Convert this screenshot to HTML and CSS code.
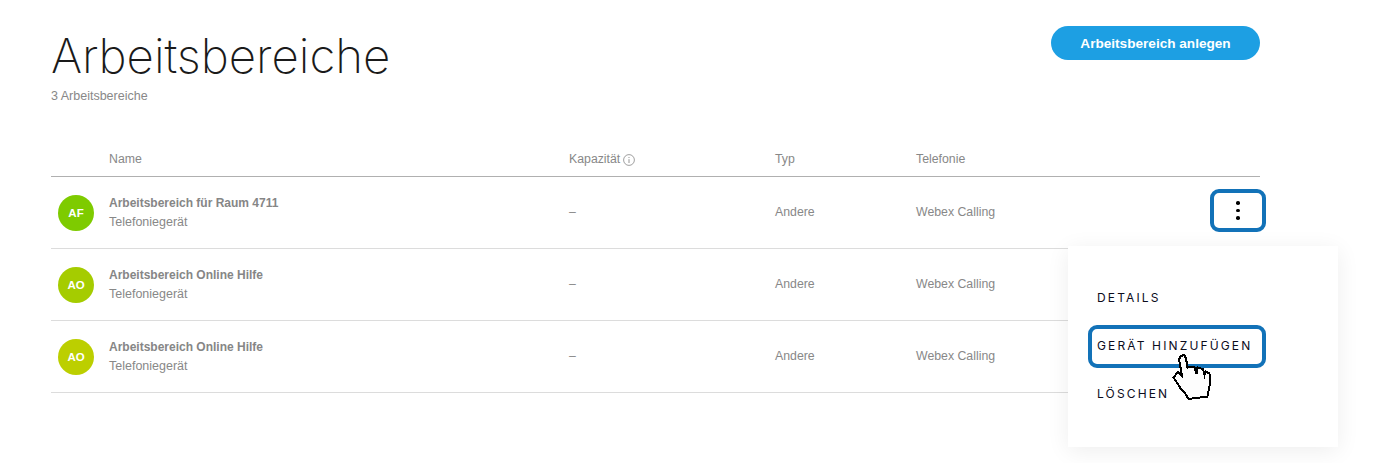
FILE: index.html
```html
<!DOCTYPE html>
<html lang="de">
<head>
    <meta charset="UTF-8">
    <title>Arbeitsbereiche</title>
    <link rel="stylesheet" href="styles.css">
</head>
<body>
    <div class="page">
        <div class="page-header">
            <div>
                <h1>Arbeitsbereiche</h1>
                <div class="count">3 Arbeitsbereiche</div>
            </div>
            <button class="add-button">Arbeitsbereich anlegen</button>
        </div>

        <div class="table">
            <div class="row head">
                <span></span>
                <span>Name</span>
                <span class="capacity">Kapazität
                    <svg class="info" width="12" height="12" viewBox="0 0 12 12">
                        <circle cx="6" cy="6" r="5.4" fill="none" stroke="#888" stroke-width="0.8"/>
                        <path d="M6 5.2V9" stroke="#888" stroke-width="0.9"/>
                        <circle cx="6" cy="3.5" r="0.6" fill="#888"/>
                    </svg>
                </span>
                <span>Typ</span>
                <span>Telefonie</span>
            </div>

            <div class="row item">
                <div class="avatar af">AF</div>
                <div>
                    <div class="title">Arbeitsbereich für Raum 4711</div>
                    <div class="sub">Telefoniegerät</div>
                </div>
                <span class="cell">–</span>
                <span class="cell">Andere</span>
                <span class="cell">Webex Calling</span>
                <button class="more" aria-label="Mehr">
                    <span class="dot"></span>
                    <span class="dot"></span>
                    <span class="dot"></span>
                </button>
            </div>

            <div class="row item">
                <div class="avatar ao1">AO</div>
                <div>
                    <div class="title">Arbeitsbereich Online Hilfe</div>
                    <div class="sub">Telefoniegerät</div>
                </div>
                <span class="cell">–</span>
                <span class="cell">Andere</span>
                <span class="cell">Webex Calling</span>
            </div>

            <div class="row item">
                <div class="avatar ao2">AO</div>
                <div>
                    <div class="title">Arbeitsbereich Online Hilfe</div>
                    <div class="sub">Telefoniegerät</div>
                </div>
                <span class="cell">–</span>
                <span class="cell">Andere</span>
                <span class="cell">Webex Calling</span>
            </div>
        </div>
    </div>

    <div class="menu">
        <div class="menu-item">DETAILS</div>
        <div class="menu-item active">GERÄT HINZUFÜGEN</div>
        <div class="menu-item">LÖSCHEN</div>
    </div>

    <!-- hand cursor on top of the menu -->
    <svg class="cursor" width="42" height="50" viewBox="0 0 42 50">
        <path d="M7 7L9 4L12 3L14 6L15.500 16L17 14.500L22.500 15L24.500 22L25.500 15.500L31 17L32.500 23L33.500 19.500L37.500 21.500L38 31L35.500 44.500L16.500 47L13 41L9 37L1.500 25.500L6 20L10 24Z" fill="#fdfdfd" stroke="#000" stroke-width="2" shape-rendering="crispEdges"/>
    </svg>
</body>
</html>
```

FILE: styles.css
```css
html, body {
    margin: 0;
    padding: 0;
    background-color: #ffffff;
}

body {
    height: 463px;
    overflow: hidden;
    position: relative;
    font-family: "Liberation Sans", Arial, sans-serif;
    font-size: 12.5px;
    color: #888888;
}

.page {
    width: 1209px;
    padding: 26px 0 0 51px;
}

.page-header {
    display: flex;
    justify-content: space-between;
    align-items: flex-start;
    height: 124px;
}

h1 {
    margin: 0;
    font-family: Inter, sans-serif;
    font-weight: 200;
    font-size: 47.4px;
    line-height: 60px;
    color: #1a1a1a;
}

.count {
    margin-top: 3px;
}

.add-button {
    width: 209px;
    height: 34px;
    border: none;
    border-radius: 17px;
    background-color: #1d9fe3;
    color: white;
    font-family: "Liberation Sans", Arial, sans-serif;
    font-size: 13.6px;
    font-weight: bold;
}

.row {
    display: grid;
    grid-template-columns: 58px 460px 206px 141px 1fr;
    align-items: center;
    position: relative;
}

.head {
    height: 24px;
    padding-top: 2px;
    border-bottom: 1px solid #b0b0b0;
    align-items: start;
    font-size: 12.3px;
}

.capacity {
    display: flex;
    align-items: center;
    gap: 3px;
}

.info {
    margin-top: 2px;
}

.item {
    height: 71px;
    border-bottom: 1px solid #dcdcdc;
}

.cell {
    font-size: 12.3px;
    margin-top: -2px;
}

.avatar {
    width: 36px;
    height: 36px;
    margin-left: 7px;
    border-radius: 50%;
    color: white;
    font-size: 11.5px;
    font-weight: bold;
    line-height: 36px;
    text-align: center;
}

.af { background-color: #7ecb00; }
.ao1 { background-color: #a5cc00; }
.ao2 { background-color: #bccf00; }

.title {
    font-size: 12px;
    font-weight: bold;
    color: #868686;
    margin-bottom: 5px;
}

.more {
    position: absolute;
    right: -6px;
    top: 12px;
    width: 56px;
    height: 43px;
    box-sizing: border-box;
    border: 4px solid #1272b8;
    border-radius: 9px;
    background: white;
    display: flex;
    flex-direction: column;
    align-items: center;
    justify-content: center;
    gap: 4px;
    padding: 0;
}

.dot {
    width: 3.5px;
    height: 3.5px;
    border-radius: 50%;
    background-color: #000;
}

.menu {
    position: absolute;
    left: 1068px;
    top: 246px;
    width: 270px;
    height: 201px;
    box-sizing: border-box;
    padding: 31px 72px 0 21px;
    background: white;
    box-shadow: 0 4px 22px rgba(0, 0, 0, 0.07);
    display: flex;
    flex-direction: column;
    gap: 6px;
}

.menu-item {
    height: 42px;
    box-sizing: border-box;
    padding-left: 8px;
    border: 4px solid transparent;
    border-left-width: 0;
    font-family: Inter, sans-serif;
    font-size: 12px;
    letter-spacing: 2.14px;
    line-height: 34px;
    color: #0c0c1c;
    white-space: nowrap;
}

.active {
    height: 43px;
    margin: 0 0 -1px -1px;
    border: 4px solid #1272b8;
    border-radius: 9px;
    padding-left: 5px;
}

.cursor {
    position: absolute;
    left: 1172px;
    top: 352px;
}
```
